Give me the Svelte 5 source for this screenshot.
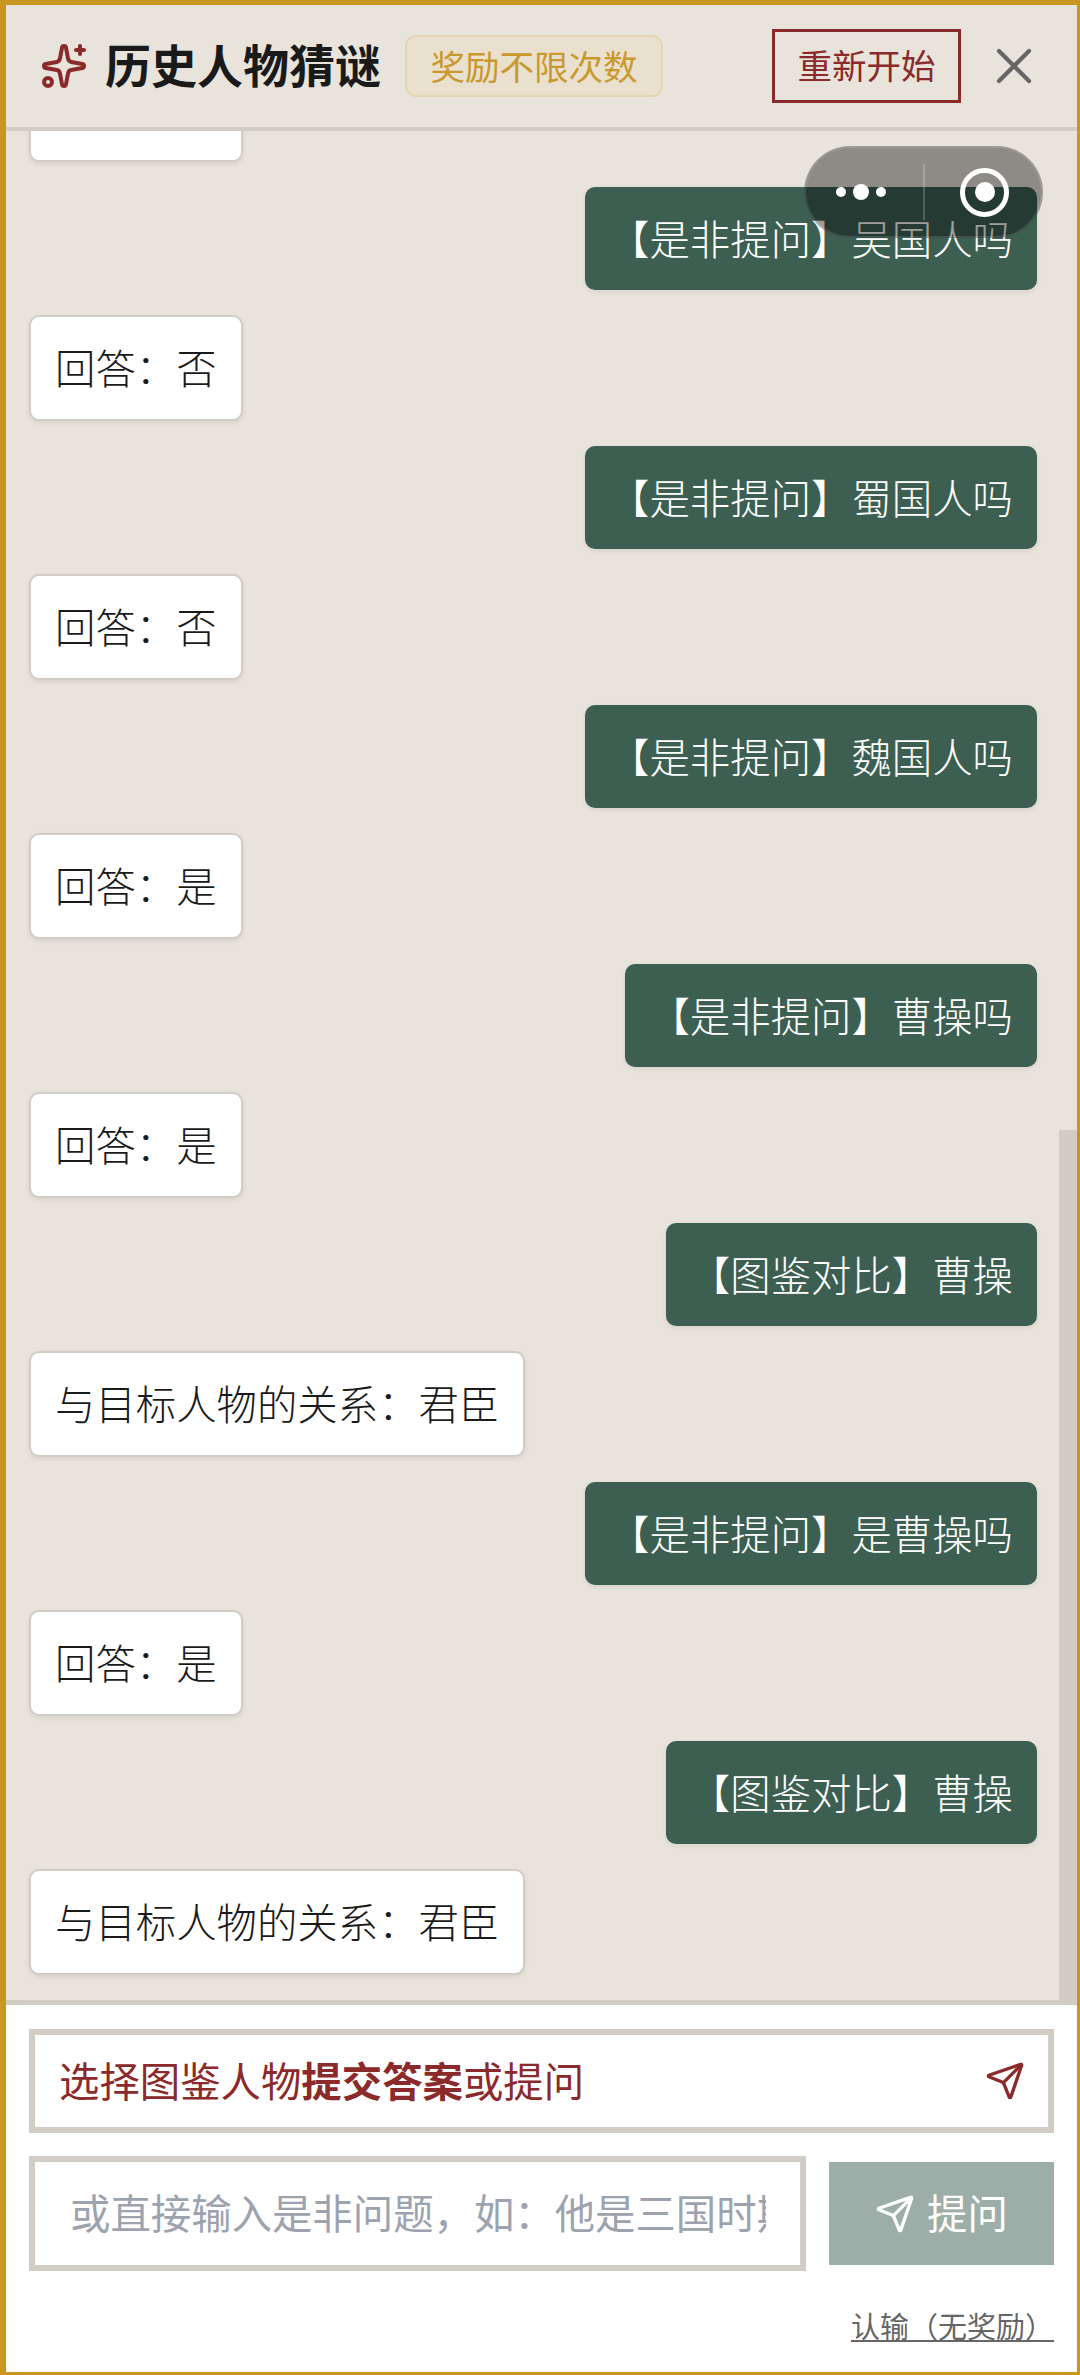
<script lang="ts">
	type Msg = { side: 'left' | 'right'; text: string };

	const messages: Msg[] = [
		{ side: 'left', text: '回答：否' },
		{ side: 'right', text: '【是非提问】吴国人吗' },
		{ side: 'left', text: '回答：否' },
		{ side: 'right', text: '【是非提问】蜀国人吗' },
		{ side: 'left', text: '回答：否' },
		{ side: 'right', text: '【是非提问】魏国人吗' },
		{ side: 'left', text: '回答：是' },
		{ side: 'right', text: '【是非提问】曹操吗' },
		{ side: 'left', text: '回答：是' },
		{ side: 'right', text: '【图鉴对比】曹操' },
		{ side: 'left', text: '与目标人物的关系：君臣' },
		{ side: 'right', text: '【是非提问】是曹操吗' },
		{ side: 'left', text: '回答：是' },
		{ side: 'right', text: '【图鉴对比】曹操' },
		{ side: 'left', text: '与目标人物的关系：君臣' }
	];
</script>

{#snippet sendIcon()}
	<svg class="send" viewBox="0 0 24 24" fill="none" stroke="currentColor" stroke-width="2" stroke-linecap="round" stroke-linejoin="round">
		<path d="M14.536 21.686a.5.5 0 0 0 .937-.024l6.5-19a.496.496 0 0 0-.635-.635l-19 6.5a.5.5 0 0 0-.024.937l7.93 3.18a2 2 0 0 1 1.112 1.11z" />
		<path d="m21.854 2.147-10.94 10.939" />
	</svg>
{/snippet}

<div class="app">
	<header class="header">
		<svg class="sparkles" viewBox="0 0 24 24" fill="none" stroke="currentColor" stroke-width="2" stroke-linecap="round" stroke-linejoin="round">
			<path d="M11.017 2.814a1 1 0 0 1 1.966 0l1.051 5.558a2 2 0 0 0 1.594 1.594l5.558 1.051a1 1 0 0 1 0 1.966l-5.558 1.051a2 2 0 0 0-1.594 1.594l-1.051 5.558a1 1 0 0 1-1.966 0l-1.051-5.558a2 2 0 0 0-1.594-1.594l-5.558-1.051a1 1 0 0 1 0-1.966l5.558-1.051a2 2 0 0 0 1.594-1.594z" />
			<path d="M20 2v4" />
			<path d="M22 4h-4" />
			<circle cx="4" cy="20" r="2" />
		</svg>
		<h1 class="title">历史人物猜谜</h1>
		<span class="badge">奖励不限次数</span>
		<button class="restart">重新开始</button>
		<svg class="close" viewBox="0 0 24 24" fill="none" stroke="currentColor" stroke-width="1.7" stroke-linecap="round" stroke-linejoin="round">
			<path d="M18 6 6 18" />
			<path d="m6 6 12 12" />
		</svg>
	</header>

	<main class="chat">
		{#each messages as msg}
			<div class="bubble {msg.side}">{msg.text}</div>
		{/each}
		<div class="scrollbar"></div>
	</main>

	<footer class="footer">
		<button class="answer">
			<span class="answer-label">选择图鉴人物<b>提交答案</b>或提问</span>
			{@render sendIcon()}
		</button>
		<div class="ask-row">
			<input class="ask-input" placeholder="或直接输入是非问题，如：他是三国时期的人吗" />
			<button class="ask-btn">
				{@render sendIcon()}
				<span class="ask-label">提问</span>
			</button>
		</div>
		<div class="giveup-row">
			<span class="giveup">认输（无奖励）</span>
		</div>
	</footer>

	<!-- WeChat mini program capsule -->
	<div class="capsule">
		<span class="dots"><i></i><i class="big"></i><i></i></span>
		<span class="divider"></span>
		<span class="target"><i></i></span>
	</div>
</div>

<style>
	:global(body) {
		margin: 0;
		background: #fff;
	}

	.app {
		position: relative;
		box-sizing: border-box;
		height: 100vh;
		display: flex;
		flex-direction: column;
		border-style: solid;
		border-color: #c9961f;
		border-width: 5px 3px 3px 6px;
		font-family: 'Noto Sans CJK SC', sans-serif;
		overflow: hidden;
	}

	.header {
		flex: none;
		box-sizing: border-box;
		height: 126px;
		display: flex;
		align-items: center;
		padding: 0 33px 0 34px;
		background: #e8e4dc;
		border-bottom: 4px solid #d1cdc5;
	}

	.sparkles {
		width: 48px;
		height: 48px;
		color: #8b2a2a;
		flex: none;
	}

	.title {
		margin: 0 24px 4px 17px;
		font-size: 46px;
		line-height: 1.2;
		font-weight: 700;
		color: #1a1a1a;
	}

	.badge {
		box-sizing: border-box;
		width: 258px;
		height: 62px;
		display: flex;
		align-items: center;
		justify-content: center;
		padding-bottom: 2px;
		border: 2px solid #e2d5b0;
		border-radius: 11px;
		background: #e9e1ce;
		color: #c9982f;
		font-size: 34.5px;
	}

	.restart {
		box-sizing: border-box;
		width: 189px;
		height: 74px;
		margin-left: auto;
		padding: 0 0 4px;
		background: transparent;
		border: 3px solid #8b2a2a;
		border-radius: 0;
		color: #8b2a2a;
		font-family: inherit;
		font-size: 34.5px;
	}

	.close {
		width: 60px;
		height: 60px;
		margin-left: 23px;
		color: #666;
		flex: none;
	}

	.chat {
		position: relative;
		flex: 1;
		min-height: 0;
		overflow: hidden;
		display: flex;
		flex-direction: column;
		justify-content: flex-end;
		gap: 25px;
		padding: 0 40px 25px 23px;
		background: #e8e4dc;
	}

	.bubble {
		flex: none;
		box-sizing: border-box;
		width: fit-content;
		padding: 20px 24px 22px;
		font-size: 40.4px;
		line-height: 60px;
		font-weight: 300;
		border-radius: 10px;
		box-shadow: 0 2px 5px rgba(0, 0, 0, 0.08);
	}

	.bubble.left {
		background: #fff;
		color: #1a1a1a;
		border: 2px solid #d1cdc5;
	}

	.bubble.right {
		align-self: flex-end;
		padding: 20.5px 24px 22.5px;
		background: #3c5f52;
		color: #fff;
	}

	.scrollbar {
		position: absolute;
		top: 999px;
		right: 0;
		bottom: 0;
		width: 18px;
		background: #d1cdc5;
	}

	.footer {
		flex: none;
		box-sizing: border-box;
		height: 372px;
		display: flex;
		flex-direction: column;
		padding: 24px 23px 0;
		background: #fff;
		border-top: 5px solid #d1cdc5;
	}

	.answer {
		box-sizing: border-box;
		height: 104px;
		display: flex;
		align-items: center;
		justify-content: space-between;
		padding: 0 23px 0 24px;
		background: #fff;
		border: 6px solid #d1cdc5;
		border-radius: 0;
		color: #8b2a2a;
		font-family: inherit;
		font-size: 40.4px;
	}

	.answer-label {
		padding-bottom: 4px;
	}

	.answer b {
		font-weight: 700;
	}

	.send {
		width: 40px;
		height: 40px;
		flex: none;
	}

	.ask-row {
		display: flex;
		align-items: center;
		gap: 23px;
		margin-top: 23px;
	}

	.ask-input {
		box-sizing: border-box;
		width: 777px;
		height: 115px;
		padding: 0 34px 4px 35px;
		background: #fff;
		border: 6px solid #d1cdc5;
		border-radius: 0;
		outline: none;
		font-family: inherit;
		font-size: 40.4px;
		color: #1a1a1a;
	}

	.ask-input::placeholder {
		color: #9ca3af;
		opacity: 1;
	}

	.ask-btn {
		box-sizing: border-box;
		width: 225px;
		height: 103px;
		display: flex;
		align-items: center;
		justify-content: center;
		gap: 12px;
		padding: 0;
		background: #9dada7;
		border: none;
		border-radius: 0;
		color: #fff;
		font-family: inherit;
		font-size: 40.4px;
	}

	.ask-label {
		padding-bottom: 4px;
	}

	.giveup-row {
		display: flex;
		justify-content: flex-end;
		margin-top: 37px;
	}

	.giveup {
		font-size: 29px;
		line-height: 34px;
		color: #666;
		text-decoration: underline;
		text-underline-offset: 2px;
	}

	.capsule {
		position: absolute;
		left: 798px;
		top: 141px;
		box-sizing: border-box;
		width: 239px;
		height: 92px;
		display: flex;
		align-items: center;
		background: rgba(0, 0, 0, 0.39);
		border: 2px solid rgba(255, 255, 255, 0.12);
		border-radius: 46px;
	}

	.dots {
		box-sizing: border-box;
		width: 117px;
		display: flex;
		align-items: center;
		justify-content: center;
		gap: 7px;
		padding-right: 8px;
	}

	.dots i {
		width: 10px;
		height: 10px;
		border-radius: 50%;
		background: #fff;
	}

	.dots i.big {
		width: 16px;
		height: 16px;
	}

	.divider {
		width: 2px;
		height: 56px;
		background: rgba(255, 255, 255, 0.2);
	}

	.target {
		box-sizing: border-box;
		width: 49px;
		height: 49px;
		margin-left: 35px;
		display: flex;
		align-items: center;
		justify-content: center;
		border: 5px solid #fff;
		border-radius: 50%;
	}

	.target i {
		width: 20px;
		height: 20px;
		border-radius: 50%;
		background: #fff;
	}
</style>
